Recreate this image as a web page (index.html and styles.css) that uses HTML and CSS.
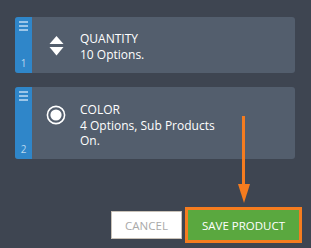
FILE: index.html
```html
<!DOCTYPE html>
<html>
<head>
<meta charset="utf-8">
<link rel="stylesheet" href="styles.css">
</head>
<body>
<div class="page">
  <div class="list">
    <div class="card card-short">
      <div class="handle">
        <div class="grip"><span></span><span></span><span></span></div>
        <div class="num">1</div>
      </div>
      <div class="icon">
        <svg width="15" height="20" viewBox="0 0 15 20">
          <polygon points="7.5,0 14.5,8 0.5,8" fill="#fff"/>
          <polygon points="0.5,11 14.5,11 7.5,19.5" fill="#fff"/>
        </svg>
      </div>
      <div class="text">
        <div class="title">QUANTITY</div>
        <div class="desc">10 Options.</div>
      </div>
    </div>
    <div class="card card-tall">
      <div class="handle">
        <div class="grip"><span></span><span></span><span></span></div>
        <div class="num">2</div>
      </div>
      <div class="icon">
        <svg width="20" height="20" viewBox="0 0 20 20">
          <circle cx="10" cy="10" r="8.6" fill="none" stroke="#fff" stroke-width="1.6"/>
          <circle cx="10" cy="10" r="5.6" fill="#fff"/>
        </svg>
      </div>
      <div class="text">
        <div class="title">COLOR</div>
        <div class="desc">4 Options, Sub Products<br>On.</div>
      </div>
    </div>
  </div>
  <div class="actions">
    <button class="btn btn-cancel">CANCEL</button>
    <button class="btn btn-save">SAVE PRODUCT</button>
  </div>
  <div class="arrow">
    <div class="arrow-line"></div>
    <div class="arrow-head"></div>
  </div>
</div>
</body>
</html>
```

FILE: styles.css
```css
html, body {
  margin: 0;
  padding: 0;
  background: #3e4551;
}
body {
  width: 311px;
  height: 248px;
  overflow: hidden;
  font-family: "Open Sans", "DejaVu Sans", sans-serif;
}
.page {
  position: relative;
  padding: 17px 16px 0 15px;
}
.list {
  display: flex;
  flex-direction: column;
  gap: 14px;
}
.card {
  display: flex;
  background: #535e6d;
  border-radius: 3px;
  overflow: hidden;
}
.card-short { height: 56px; }
.card-tall { height: 72px; }
.handle {
  width: 17px;
  background: #2f86c9;
  display: flex;
  flex-direction: column;
  align-items: center;
  justify-content: space-between;
  padding: 4px 0 4px;
  box-sizing: border-box;
}
.grip {
  display: flex;
  flex-direction: column;
  gap: 2px;
  width: 9px;
}
.grip span {
  display: block;
  height: 2px;
  background: #9cc6e8;
}
.num {
  font-size: 10px;
  line-height: 12px;
  color: #b9d8f0;
}
.icon {
  width: 48px;
  display: flex;
  justify-content: center;
  align-items: center;
}
.card-short .icon { padding-top: 1px; }
.card-tall .icon { padding-bottom: 16px; }
.text {
  color: #fff;
  font-size: 12px;
  line-height: 15.5px;
  padding-top: 14px;
}
.card-tall .text { padding-top: 15px; }
.actions {
  display: flex;
  justify-content: flex-end;
  align-items: center;
  gap: 3px;
  margin-top: 48px;
  margin-right: -7px;
}
.btn {
  font-family: "Open Sans", "DejaVu Sans", sans-serif;
  font-size: 11.5px;
  box-sizing: border-box;
  margin: 0;
  padding: 0;
  cursor: pointer;
}
.btn-cancel {
  width: 71px;
  height: 28px;
  background: #fff;
  border: 1px solid #c9c2b8;
  color: #a9a9a9;
}
.btn-save {
  width: 117px;
  height: 36px;
  background: #5aa83f;
  border: 3px solid #f57c1f;
  color: #fff;
}
.arrow {
  position: absolute;
  left: 237px;
  top: 116px;
  width: 13px;
  display: flex;
  flex-direction: column;
  align-items: center;
}
.arrow-line {
  width: 3px;
  height: 68px;
  background: #f57c1f;
}
.arrow-head {
  width: 0;
  height: 0;
  border-left: 6.5px solid transparent;
  border-right: 6.5px solid transparent;
  border-top: 19px solid #f57c1f;
}
```
